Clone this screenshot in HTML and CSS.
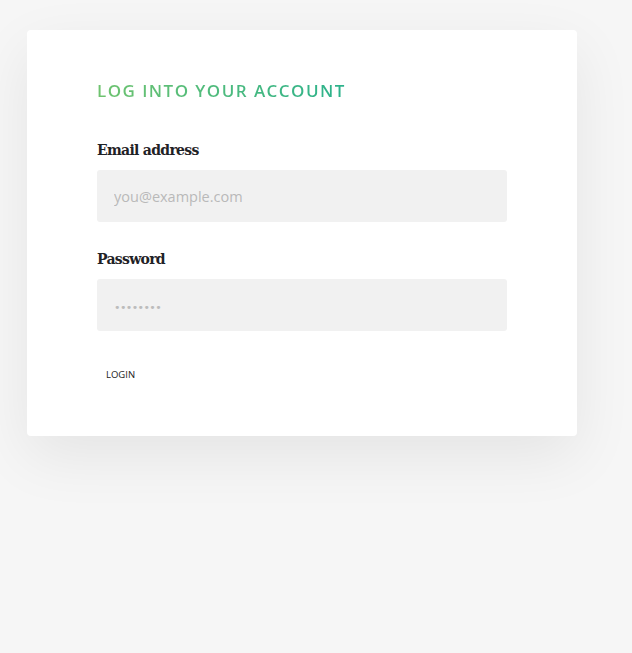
FILE: index.html
```html
<!DOCTYPE html>
<html>
<head>
<meta charset="utf-8">
<link rel="stylesheet" href="styles.css">
</head>
<body>
<div class="card">
  <h1 class="title">LOG INTO YOUR ACCOUNT</h1>
  <form class="form">
    <label class="label" for="email">Email address</label>
    <input class="input" id="email" type="text" placeholder="you@example.com">
    <label class="label label-pw" for="pw">Password</label>
    <input class="input input-pw" id="pw" type="password" placeholder="••••••••">
    <button class="btn" type="button">LOGIN</button>
  </form>
</div>
</body>
</html>
```
FILE: styles.css
```css
html, body { margin: 0; padding: 0; }
body {
  background: #f6f6f6;
  width: 632px;
  height: 653px;
  padding: 30px 0 0 27px;
  box-sizing: border-box;
  font-family: "Open Sans", sans-serif;
}
.card {
  width: 550px;
  height: 406px;
  box-sizing: border-box;
  background: #fff;
  border-radius: 4px;
  padding: 50px 70px;
  box-shadow: 0 20px 60px rgba(0,0,0,0.075);
}
.title {
  margin: 0;
  font-size: 17px;
  line-height: 22px;
  height: 22px;
  font-weight: 600;
  letter-spacing: 1.45px;
  background: linear-gradient(90deg, #6fc36f, #2cb28c);
  -webkit-background-clip: text;
  background-clip: text;
  color: transparent;
  width: fit-content;
}
.form { display: flex; flex-direction: column; align-items: flex-start; }
.label {
  margin-top: 38px;
  font-family: "DejaVu Serif", serif;
  font-weight: bold;
  font-size: 14px;
  line-height: 20px;
  color: #1f2226;
  letter-spacing: -0.7px;
}
.label-pw { margin-top: 27px; }
.input {
  margin-top: 10px;
  width: 410px;
  height: 52px;
  box-sizing: border-box;
  border: none;
  border-radius: 3px;
  background: #f1f1f1;
  padding: 0 17px;
  font-family: "Open Sans", sans-serif;
  font-size: 14.5px;
  color: #333;
  outline: none;
}
.input::placeholder { color: #b9b9b9; }
.input-pw::placeholder { font-family: "DejaVu Sans", sans-serif; font-size: 11px; letter-spacing: -0.6px; color: #bcbcbc; }
.btn {
  margin-top: 31px;
  border: none;
  background: transparent;
  padding: 0 9px;
  height: 24px;
  font-family: "Open Sans", sans-serif;
  font-size: 9.5px;
  color: #222;
}
```
